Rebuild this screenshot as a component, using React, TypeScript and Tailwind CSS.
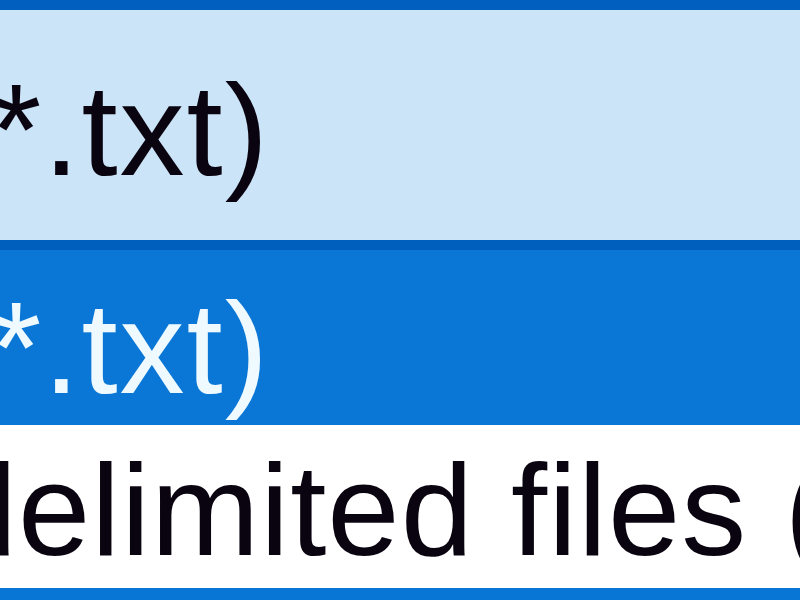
import React from "react";

const font = "font-['Liberation_Sans',Arial,sans-serif]";

export default function App() {
  return (
    <div className="w-[800px] h-[600px] overflow-hidden flex flex-col bg-white">
      <div className="h-[10px] shrink-0 bg-[#005fbf]" />
      <div className="h-[230px] shrink-0 bg-[#cce4f7] overflow-hidden pt-[55px]">
        <div className="w-[270px] flex justify-end">
          <span
            className={`${font} text-[130px] leading-none whitespace-nowrap text-[#0a0410] tracking-[2px] inline-block shrink-0`}
          >
            Unicode Text (*.txt)
          </span>
        </div>
      </div>
      <div className="h-[10px] shrink-0 bg-[#005fbd]" />
      <div className="h-[175px] shrink-0 bg-[#0a77d6] overflow-hidden pt-[33px]">
        <div className="w-[270px] flex justify-end">
          <span
            className={`${font} text-[130px] leading-none whitespace-nowrap text-[#eefaff] tracking-[2px] inline-block shrink-0`}
          >
            Text (Tab delimited) (*.txt)
          </span>
        </div>
      </div>
      <div className="h-[163px] shrink-0 bg-white overflow-hidden pt-[20px]">
        <span
          className={`${font} text-[130px] leading-none whitespace-nowrap text-[#0a0410] tracking-[1px] inline-block -ml-[305px]`}
        >
          Tab delimited files (*.txt)
        </span>
      </div>
      <div className="h-[12px] shrink-0 bg-[#0876d5]" />
    </div>
  );
}
